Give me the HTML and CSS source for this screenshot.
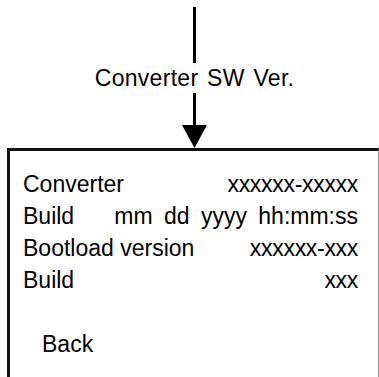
FILE: index.html
```html
<!DOCTYPE html>
<html>
<head>
<meta charset="utf-8">
<link rel="stylesheet" href="styles.css">
</head>
<body>
<div class="flow">
  <div class="line-top"></div>
  <div class="label">Converter SW Ver.</div>
  <svg class="arrow" width="27" height="55" viewBox="0 0 27 55">
    <rect x="12" y="0" width="3" height="34" fill="#000"/>
    <polygon points="1,32 26,32 13.5,55" fill="#000"/>
  </svg>
</div>
<div class="box">
  <div class="rows">
    <div class="row"><span>Converter</span><span class="val">xxxxxx-xxxxx</span></div>
    <div class="row"><span>Build</span><span class="val">mm dd yyyy hh:mm:ss</span></div>
    <div class="row"><span>Bootload version</span><span class="val">xxxxxx-xxx</span></div>
    <div class="row"><span>Build</span><span class="val">xxx</span></div>
  </div>
  <div class="back">Back</div>
</div>
</body>
</html>
```
FILE: styles.css
```css
html, body {
  margin: 0;
  padding: 0;
  background: #fff;
  height: 100%;
  overflow: hidden;
}
body {
  font-family: "Liberation Sans", Arial, sans-serif;
  color: #000;
  font-size: 23px;
}
.flow {
  display: flex;
  flex-direction: column;
  align-items: center;
  padding-left: 10px;
  padding-top: 7px;
}
.line-top {
  width: 3px;
  height: 56px;
  background: #000;
}
.label {
  line-height: 30px;
  height: 30px;
  word-spacing: 2px;
  letter-spacing: 0.3px;
}
.arrow {
  display: block;
}
.box {
  margin-left: 7px;
  border-top: 3px solid #111;
  border-left: 3px solid #111;
  border-right: 1px solid #999;
  height: 209px;
  padding: 17px 20px 0 13px;
}
.rows {
  display: flex;
  flex-direction: column;
}
.row {
  display: flex;
  justify-content: space-between;
  line-height: 32px;
  height: 32px;
}
.val {
  letter-spacing: -0.3px;
}
.row:nth-child(2) .val {
  letter-spacing: 0;
  word-spacing: 5px;
}
.back {
  margin-top: 32px;
  padding-left: 19px;
  line-height: 32px;
}
```
